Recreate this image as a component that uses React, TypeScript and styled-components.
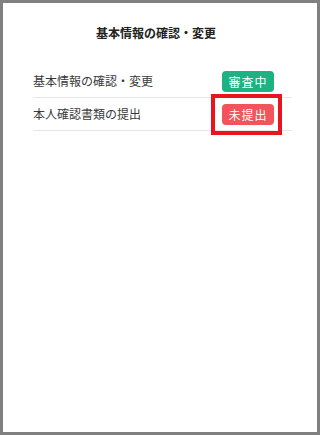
import React from "react";
import styled, { createGlobalStyle, css } from "styled-components";

const GlobalStyle = createGlobalStyle`
  html, body {
    margin: 0;
    padding: 0;
    background: #808080;
  }
  body {
    font-family: "Noto Sans CJK JP", "Noto Sans", sans-serif;
  }
`;

const Frame = styled.div`
  width: 320px;
  height: 435px;
  box-sizing: border-box;
  border: 3px solid #808080;
  background: #fff;
  padding: 20px 25px 0 30px;
`;

const Title = styled.h1`
  margin: 0;
  font-size: 12px;
  line-height: 20px;
  font-weight: 700;
  color: #222;
  text-align: center;
  padding-right: 13px;
`;

const List = styled.ul`
  list-style: none;
  margin: 22px 0 0;
  padding: 0;
`;

const Row = styled.li`
  display: flex;
  align-items: center;
  justify-content: space-between;
  height: 32px;
  border-bottom: 1px solid #e6e6e6;
`;

const Label = styled.span`
  font-size: 12px;
  color: #3a3a3a;
  margin-top: -2px;
`;

const Badge = styled.span<{ $tone: "green" | "red"; $marked?: boolean }>`
  position: relative;
  display: inline-flex;
  align-items: center;
  justify-content: center;
  width: 52px;
  height: 21px;
  margin-right: 18px;
  border-radius: 4px;
  font-size: 12px;
  font-weight: 400;
  color: #fff;
  letter-spacing: 1px;
  background: ${(p) => (p.$tone === "green" ? "#1db184" : "#f2545b")};

  ${(p) =>
    p.$marked &&
    css`
      &::after {
        content: "";
        position: absolute;
        left: -11px;
        right: -8px;
        top: -10px;
        bottom: -10px;
        border: 4px solid #e8141f;
      }
    `}
`;

const items = [
  { label: "基本情報の確認・変更", status: "審査中", tone: "green" as const },
  { label: "本人確認書類の提出", status: "未提出", tone: "red" as const, marked: true },
];

export default function App() {
  return (
    <>
      <GlobalStyle />
      <Frame>
        <Title>基本情報の確認・変更</Title>
        <List>
          {items.map((item) => (
            <Row key={item.label}>
              <Label>{item.label}</Label>
              <Badge $tone={item.tone} $marked={item.marked}>
                {item.status}
              </Badge>
            </Row>
          ))}
        </List>
      </Frame>
    </>
  );
}
